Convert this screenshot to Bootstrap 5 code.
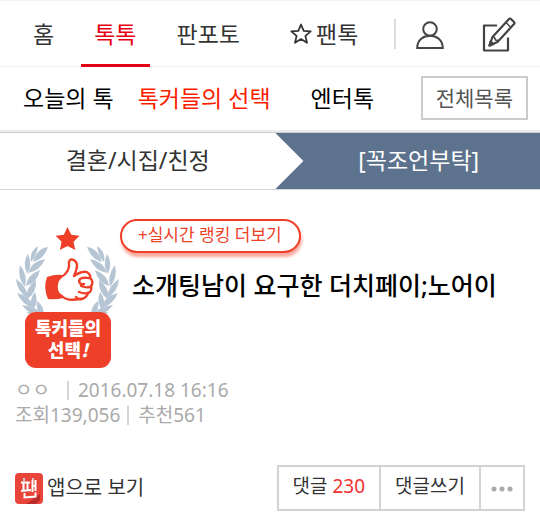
<!DOCTYPE html>
<html lang="ko">
<head>
<meta charset="utf-8">
<meta name="viewport" content="width=device-width, initial-scale=1">
<title>소개팅남이 요구한 더치페이;노어이</title>
<link href="https://cdn.jsdelivr.net/npm/bootstrap@5.3.0/dist/css/bootstrap.min.css" rel="stylesheet">
<style>
body{font-family:"Noto Sans","Noto Sans CJK KR",sans-serif;font-size:23px;line-height:32px;color:#333;background:#fff}
a{color:inherit;text-decoration:none}
svg{display:block;flex:none}
.gnb{height:67px;border-top:1px solid #f3f3f3;border-bottom:1px solid #f3f3f3;padding:0 24px 0 20px}
.gnb a{display:flex;align-items:center;height:66px;padding:0 13px;white-space:nowrap}
.gnb .tabs{gap:14px}
.gnb .fan{margin-left:10px}
.gnb .active{color:#e60013;border-bottom:3px solid #e60013;padding-top:3px}
.gnb .tools{gap:38px}
.gnb .tools a{padding:0}
.gnb .rule{width:2px;height:30px;background:#ddd}
.sub{height:66px;padding:0 12px 4px 23px;color:#000;border-bottom:1px solid #ccc;box-shadow:inset 0 -2px #ededed;white-space:nowrap}
.sub .links{gap:24px}
.sub .on{color:#fa1e00}
.sub .wide{margin-left:16px}
.all{font-size:21px;line-height:26px;color:#555;border:2px solid #ccc;border-radius:0;padding:7px 13px}
.all:hover{border-color:#aaa}
.crumb{height:57px;border-bottom:1px solid #d3d5dc;white-space:nowrap}
.crumb a{display:flex;align-items:center;justify-content:center;padding-bottom:2px}
.crumb .here{width:49%;color:#fff;background:#5d728c;padding-left:22px;clip-path:polygon(0 0,100% 0,100% 100%,0 100%,28px 50%)}
.crumb .up{width:51%}
.post{padding:26px 15px 0}
.rank{font-size:17px;line-height:26px;color:#ee3f28;border:2px solid #ee3f28;border-radius:17px;padding:1px 17px 3px 16px;box-shadow:1px 4px 3px #f9aaa0;background:#fff}
h1{font-size:25px;line-height:36px;font-weight:500;color:#000;margin:14px 0 0 12px}
.medal{margin-top:10px}
.meta{font-size:19px;line-height:25px;color:#aaa;margin-top:9px}
.meta .bar{display:inline-block;width:2px;height:19px;background:#d5d5d5;vertical-align:-3px;margin:0 9px 0 7px}
.meta .gap-l{margin-left:12px}
.tail{padding:37px 15px 18px;font-size:20px}
.acts{font-size:19px}
.acts .btn{font-size:19px;line-height:26px;color:#333;border:2px solid #d3d3d3;border-radius:0;padding:6px 14px 10px;margin-left:-2px;height:46px}
.acts .num{color:#f03232}
</style>
<script src="https://cdn.jsdelivr.net/npm/bootstrap@5.3.0/dist/js/bootstrap.bundle.min.js"></script>
</head>
<body>
<header>
<nav class="gnb d-flex justify-content-between align-items-center">
  <div class="tabs d-flex">
    <a href="#">홈</a>
    <a href="#" class="active" aria-current="page">톡톡</a>
    <a href="#">판포토</a>
    <a href="#" class="fan"><svg class="me-1" width="22" height="22" viewBox="0 0 22 22" fill="none" stroke="#333" stroke-width="1.8" stroke-linejoin="round"><path d="M11 1.500l2.700 6.300 7 .6-5.300 4.500 1.600 6.900-6-3.700-6 3.700 1.600-6.900L1.300 8.400l7-.6z"/></svg>팬톡</a>
  </div>
  <div class="tools d-flex align-items-center">
    <span class="d-flex align-items-center gap-3"><span class="rule"></span>
    <a href="#" class="ms-1" aria-label="내 정보"><svg width="28" height="30" viewBox="0 0 28 30" fill="none" stroke="#444" stroke-width="2"><circle cx="14" cy="10" r="6.800"/><path d="M1.200 29C1.200 12.500 26.800 12.500 26.800 29z"/></svg></a></span>
    <a href="#" aria-label="글쓰기"><svg width="34" height="36" viewBox="0 0 34 36" fill="none" stroke="#444" stroke-width="2.200" stroke-linejoin="round"><path d="M15 9.500H2v25h24V21.500"/><path d="M27 3q1-1 2 0l3 3q1 1 0 2L15.500 26 7.500 29.500l3-8.500z"/><path d="M10.500 21l2 .5 1 2.500 2.500.5" stroke-width="1.600"/><path d="M7.500 29.500l1-4 3 2.500z" fill="#444"/><path d="M24 6.500l5 5" stroke-width="1.500"/></svg></a>
  </div>
</nav>
<nav class="sub d-flex justify-content-between align-items-center">
  <div class="links d-flex">
    <a href="#">오늘의 톡</a>
    <a href="#" class="on">톡커들의 선택</a>
    <a href="#" class="wide">엔터톡</a>
  </div>
  <button type="button" class="btn all">전체목록</button>
</nav>
<nav class="crumb d-flex">
  <a href="#" class="up">결혼/시집/친정</a>
  <a href="#" class="here">[꼭조언부탁]</a>
</nav>
</header>
<main>
<article class="post">
  <div class="d-flex">
    <svg class="medal" width="105" height="143" viewBox="0 0 105 143" role="img" aria-label="톡커들의 선택!">
      <path fill="#ee3f28" d="M52.500 1l3.800 7.800 8.200 1-6 6 1.800 8.200-7.800-4-7.600 4 1.700-8.200-6-6 8.200-1z"/>
      <defs><g id="wreath" fill="#b6c5d3">
        <path d="M33 21Q22 22 18 36Q29 33 33 21z"/><path d="M23 20Q14 26 16 36Q22 30 23 20z"/>
        <path d="M30 33Q17 35 13 47Q25 45 30 33z"/><path d="M13 28Q7 36 12 48Q18 39 13 28z"/>
        <path d="M25 44Q12 49 11 60Q22 57 25 44z"/><path d="M5 39Q2 51 10 61Q13 49 5 39z"/>
        <path d="M21 54Q10 62 12 73Q22 67 21 54z"/><path d="M1 53Q2 66 13 72Q12 60 1 53z"/>
        <path d="M20 66Q13 74 18 84Q24 76 20 66z"/><path d="M2 67Q7 79 19 82Q16 70 2 67z"/>
        <path d="M22 75Q20 84 28 92Q31 81 22 75z"/><path d="M7 79Q14 89 28 91Q22 80 7 79z"/>
        <path d="M11 87Q20 82 34 90z"/>
      </g></defs>
      <use href="#wreath"/><use href="#wreath" transform="translate(105 0) scale(-1 1)"/>
      <path fill="#ee3f28" d="M32 51q8-3 16-2v23q-7 2-15 1-5-11-1-22z"/>
      <path fill="#fff" stroke="#ee3f28" stroke-width="2.400" stroke-linejoin="round" stroke-linecap="round" d="M46 51c6-3 9-7 8-15 1-5 8-2 8 4 0 4-2 7-3 10 3-2 6-4 9-4 5-1 8 3 7 6 3 2 3 6 1 8 1 3 0 6-3 7-1 4-4 6-8 6-6 1-13 2-17-2-2-2-3-2-4-3-3-3-4-13 2-17z"/>
      <path fill="none" stroke="#ee3f28" stroke-width="2.400" stroke-linecap="round" d="M75 52c-4 0-8-1-10 1-2 3 0 6 4 5M75 61q-4 1-9-1M73 67q-4 1-9-1M67 73q-3 1-6-2"/>
      <rect x="10" y="86" width="86" height="56" rx="11" fill="#ee3f28"/>
      <g fill="#fff" font-family="'Noto Sans CJK KR',sans-serif" font-weight="900" text-anchor="middle" font-size="18"><text x="53" y="109">톡커들의</text><text x="53" y="131">선택<tspan font-style="italic">!</tspan></text></g>
    </svg>
    <div>
      <a href="#" class="rank d-inline-block">+실시간 랭킹 더보기</a>
      <h1>소개팅남이 요구한 더치페이;노어이</h1>
    </div>
  </div>
  <div class="meta">
    <div>ㅇㅇ <span class="bar gap-l"></span>2016.07.18 16:16</div>
    <div>조회139,056<span class="bar"></span>추천561</div>
  </div>
</article>
<div class="tail d-flex justify-content-between align-items-center">
  <a href="#" class="d-flex align-items-center"><svg class="me-1" width="28" height="31" viewBox="0 0 28 31"><rect width="28" height="31" rx="4" fill="#e9443a"/><path d="M17 27l8-6v6l-4 4H11z" fill="#bd2c2b"/><g fill="none" stroke="#fff" stroke-width="2"><path d="M6 9.500h9M8.500 9v8M12.500 9v8M6 18l10-1M17.500 7v12M17.500 13h3M20.500 7v11M9.500 20v4.500l11-1v-4"/></g><path d="M9 5v3M18 5v2" stroke="#ccc" stroke-width="2"/></svg>앱으로 보기</a>
  <div class="acts d-flex">
    <button type="button" class="btn">댓글 <span class="num">230</span></button>
    <button type="button" class="btn">댓글쓰기</button>
    <button type="button" class="btn px-2" aria-label="더보기"><svg width="26" height="26" viewBox="0 0 26 26" fill="#aaa"><circle cx="5" cy="16" r="2.500"/><circle cx="13" cy="16" r="2.500"/><circle cx="21" cy="16" r="2.500"/></svg></button>
  </div>
</div>
</main>
</body>
</html>
